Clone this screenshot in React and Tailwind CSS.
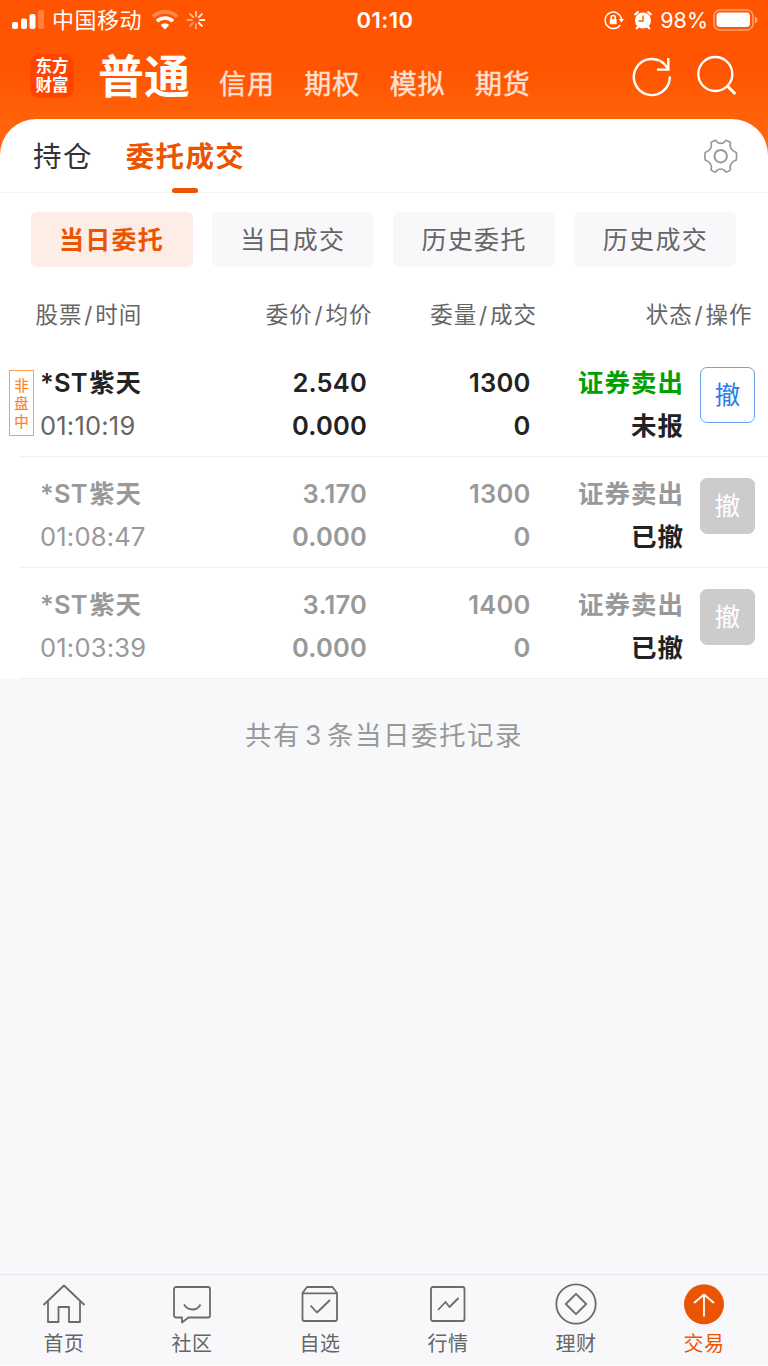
const markets = ['信用', '期权', '模拟', '期货'];

const filters = ['当日委托', '当日成交', '历史委托', '历史成交'];

const orders = [
    { name: '紫天', time: '01:10:19', price: '2.540', avg: '0.000', amount: '1300', filled: '0', side: '证券卖出', status: '未报', active: true },
    { name: '紫天', time: '01:08:47', price: '3.170', avg: '0.000', amount: '1300', filled: '0', side: '证券卖出', status: '已撤', active: false },
    { name: '紫天', time: '01:03:39', price: '3.170', avg: '0.000', amount: '1400', filled: '0', side: '证券卖出', status: '已撤', active: false },
];

const Spinner = () => (
    <svg className="w-5 h-5" viewBox="0 0 20 20" stroke="white" strokeWidth="1.9" strokeLinecap="round">
        {[0.7, 0.85, 0.95, 1, 0.45, 0.4, 0.5, 0.6].map((opacity, i) => (
            <line key={i} x1="10" y1="1.6" x2="10" y2="6" opacity={opacity} transform={`rotate(${i * 45} 10 10)`} />
        ))}
    </svg>
);

const StatusBar = () => (
    <div className="flex items-center h-10 text-white">
        <div className="flex items-center flex-1 pl-3">
            <svg className="w-8 h-5" viewBox="0 0 32 20" fill="white">
                <rect x="0" y="12" width="6" height="7" rx="2" />
                <rect x="9" y="8.5" width="6" height="10.5" rx="2" />
                <rect x="17.5" y="4" width="6" height="15" rx="2" />
                <rect x="26" y="0" width="6" height="19" rx="2" opacity="0.25" />
            </svg>
            <span className="ml-2 text-[22px] leading-10 tracking-[0.5px]">中国移动</span>
            <svg className="w-7 h-5 ml-[9px]" viewBox="0 0 28 20" fill="none" stroke="white" strokeWidth="3.6">
                <path d="M2 6.800a17 17 0 0 1 24 0" opacity="0.3" />
                <path d="M6 11.200a11.500 11.500 0 0 1 16 0" />
                <path d="M14 19.500l-4.300-4.400a6.200 6.200 0 0 1 8.600 0z" fill="white" stroke="none" />
            </svg>
            <span className="ml-[7px]"><Spinner /></span>
        </div>
        <span className="text-[22px] font-semibold leading-10 tracking-[0.5px]">01:10</span>
        <div className="flex items-center justify-end flex-1 pr-[10px]">
            <svg className="w-5 h-5" viewBox="0 0 20 20" fill="none" stroke="white" strokeWidth="1.5">
                <path d="M16.200 14.800A8.200 8.200 0 1 1 17.400 9" />
                <path d="M14.800 9h5.200l-2.600 3.600z" fill="white" stroke="none" />
                <rect x="5.8" y="9" width="6.8" height="5.2" rx="0.8" fill="white" stroke="none" />
                <path d="M7.200 9V7.400a2 2 0 0 1 4 0V9" />
            </svg>
            <svg className="w-5 h-5 ml-[9px]" viewBox="0 0 20 20">
                <circle cx="10" cy="10.5" r="8" fill="white" />
                <path d="M2.200 4.400L4.800 2.200M17.800 4.400L15.200 2.200M3.800 18.300l2-2.500M16.200 18.300l-2-2.500" stroke="white" strokeWidth="2.2" strokeLinecap="round" />
                <path d="M10 5.500V11H5.600" fill="none" stroke="#ff5500" strokeWidth="1.4" />
            </svg>
            <span className="ml-[7px] text-[21.5px] leading-10">98%</span>
            <svg className="w-[45px] h-[22px] ml-[5px]" viewBox="0 0 45 22">
                <rect x="1" y="1" width="39" height="20" rx="6" fill="none" stroke="white" strokeOpacity="0.45" strokeWidth="1.6" />
                <rect x="3.5" y="3.5" width="33.5" height="14.5" rx="3.5" fill="white" />
                <path d="M42 7.500c3.200 1.400 3.200 5.600 0 7z" fill="white" opacity="0.5" />
            </svg>
        </div>
    </div>
);

const TitleBar = () => (
    <div className="flex h-[79px] pl-[30px] text-white">
        <div className="w-11 h-11 mt-3.5 pt-[3px] rounded-[10px] bg-[#ff4400] text-center text-[16.5px] font-bold leading-[19px]">
            东方<br />财富
        </div>
        <h1 className="ml-[24px] text-[46px] font-bold leading-[72px]">普通</h1>
        <nav className="flex flex-1 gap-[29.5px] ml-[29px] pt-[26px]">
            {markets.map((market) => (
                <span key={market} className="text-[27px] leading-[38px] tracking-[0.9px] text-[#ffdfcf] [-webkit-text-stroke:0.5px_#ffdfcf]">{market}</span>
            ))}
        </nav>
        <svg className="w-10 h-10 mt-[17px] overflow-visible" viewBox="0 0 40 40" fill="none" stroke="white" strokeWidth="2.4">
            <path d="M37.800 19.500a18 18 0 1 1-4-10.800l2.700 3.600" />
            <path d="M36.300 1v11.600H25" />
        </svg>
        <svg className="w-10 h-10 mt-[17px] ml-[25px] mr-[31px] overflow-visible" viewBox="0 0 40 40" fill="none" stroke="white" strokeWidth="2.4">
            <circle cx="18.3" cy="17" r="17" />
            <path d="M30.300 29l8 8" strokeWidth="3" />
        </svg>
    </div>
);

const Tabs = () => (
    <div className="flex h-[74px] pl-[33px] pr-[29px] bg-white border-b border-[#f5f5f6] rounded-t-[36px]">
        <span className="text-[28.5px] leading-[76px] tracking-[1.4px] text-[#333]">持仓</span>
        <div className="flex flex-col items-center ml-[33px] h-[74px]">
            <span className="h-[69px] text-[28.5px] font-bold leading-[76px] tracking-[1.3px] text-[#ea5504]">委托成交</span>
            <span className="w-[26px] h-[5px] rounded-sm bg-[#ea5504] shrink-0" />
        </div>
        <svg className="w-9 h-9 mt-[19px] ml-auto" viewBox="0 0 36 36" fill="none" stroke="#999" strokeWidth="1.7" strokeLinejoin="round">
            <path d="M12.500 2.200C14 5 15.500 5.400 17.700 5.400S21.500 5 23 2.200C24.500 2.700 26 3.500 27.500 4.700C26.200 8.500 28 12.800 33.300 14.500Q34 18.200 33.300 22C28 23.500 26.200 28 27.500 31.800C26 33 24.500 33.800 23 34.200C21.500 31.500 20 31 17.700 31S14 31.500 12.500 34.200C11 33.800 9.500 33 8 31.800C9.300 28 7.500 23.500 2.200 22Q1.500 18.200 2.200 14.500C7.500 12.800 9.300 8.500 8 4.700C9.500 3.500 11 2.700 12.500 2.200Z" />
            <circle cx="17.7" cy="18.2" r="6.2" strokeWidth="2" />
        </svg>
    </div>
);

const OrderRow = ({ order }) => {
    const main = order.active ? 'text-[#222]' : 'text-[#999]';
    return (
        <div className="relative flex h-[111px] pl-10 pt-4 text-[25.5px] leading-[42.5px] tracking-[0.2px]">
            {order.active && (
                <span className="absolute left-[9px] top-[24px] w-[25px] h-[66px] pt-[6px] border border-[#ff9c4d] text-center text-[14.5px] leading-[18px] tracking-normal text-[#ff8420] [-webkit-text-stroke:0.2px_#ff8420]">
                    非<br />盘<br />中
                </span>
            )}
            <div className="w-[167px]">
                <div className={`h-[42.5px] font-semibold ${main}`}>*ST<span className="ml-[1.5px] tracking-[0.7px]">{order.name}</span></div>
                <div className={`h-[42.5px] ${order.active ? 'text-[#666]' : 'text-[#999]'}`}>{order.time}</div>
            </div>
            <div className={`w-[160px] text-right font-semibold ${main}`}>
                <div className="h-[42.5px]">{order.price}</div>
                <div className="h-[42.5px]">{order.avg}</div>
            </div>
            <div className={`w-[163.5px] text-right font-semibold ${main}`}>
                <div className="h-[42.5px]">{order.amount}</div>
                <div className="h-[42.5px]">{order.filled}</div>
            </div>
            <div className="w-[153.5px] text-right font-semibold tracking-[1px]">
                <div className={`h-[42.5px] ${order.active ? 'text-[#00a000]' : 'text-[#999]'}`}>{order.side}</div>
                <div className="h-[42.5px] text-[#222]">{order.status}</div>
            </div>
            <button
                className={`w-[55px] h-14 mt-[5px] ml-4 rounded-[7px] border text-[25.5px] leading-[54px] tracking-normal ${
                    order.active ? 'border-[#6ba3f0] text-[#2b7de9]' : 'border-[#ccc] bg-[#ccc] text-white'
                }`}
            >
                撤
            </button>
            <div className="absolute left-[19px] right-0 bottom-0 h-px bg-[#f2f2f3]" />
        </div>
    );
};

const HeaderCell = ({ first, second, className }) => (
    <span className={className}>
        {first}<span className="mx-[1.8px]">/</span>{second}
    </span>
);

const navigation = [
    {
        name: '首页',
        icon: (
            <>
                <path d="M1.500 22L22 2.500 42.500 22" />
                <path d="M6 18.500V39h10.500V24h10.500v15H38V18.500" />
            </>
        ),
    },
    {
        name: '社区',
        icon: (
            <>
                <path d="M6 4h32a2 2 0 0 1 2 2v26.500a2 2 0 0 1-2 2H18.500l-6.500 5v-5H6a2 2 0 0 1-2-2V6a2 2 0 0 1 2-2z" />
                <path d="M14 21.500q3 5 8.500 5t8-5" />
            </>
        ),
    },
    {
        name: '自选',
        icon: (
            <>
                <path d="M4.500 10v26a2 2 0 0 0 2 2h30.500a2 2 0 0 0 2-2V10l-4.500-6H9zM5 10.300h34" />
                <path d="M12.500 22.500l6.500 7L32 17" />
            </>
        ),
    },
    {
        name: '行情',
        icon: (
            <>
                <rect x="5" y="4" width="33.5" height="34" rx="2" />
                <path d="M12 27l7.500-8 4 5 9-9" />
            </>
        ),
    },
    {
        name: '理财',
        icon: (
            <>
                <circle cx="22" cy="21" r="19.700" />
                <path d="M22 10.800L32.200 21 22 31.200 11.800 21z" />
            </>
        ),
    },
    {
        name: '交易',
        active: true,
        icon: (
            <>
                <circle cx="22" cy="21.3" r="20" fill="#ea5504" stroke="none" />
                <path d="M22 33.500V11.500M12 20l10-8.500L32 20" stroke="white" />
            </>
        ),
    },
];

const BottomNav = () => (
    <nav className="grid grid-cols-6 h-[91px] bg-[#f8f8fb] border-t border-[#e4e7e9]">
        {navigation.map((item) => (
            <div key={item.name} className={`flex flex-col items-center pt-2 ${item.active ? 'text-[#ea5504]' : 'text-[#666]'}`}>
                <svg className="w-11 h-[42px]" viewBox="0 0 44 42" fill="none" stroke={item.active ? 'none' : '#6b6b6b'} strokeWidth="1.8" strokeLinejoin="round">
                    {item.icon}
                </svg>
                <span className="mt-[5px] text-[20px] leading-[28px] tracking-[0.6px]">{item.name}</span>
            </div>
        ))}
    </nav>
);

export default function App() {
    return (
        <div className="flex flex-col w-[768px] h-[1366px] overflow-hidden bg-[#f7f8fa] border-b border-white font-['Inter','Noto_Sans_CJK_SC',sans-serif]">
            <header className="bg-linear-to-b from-[#ff5500] from-[70px] to-[#ff6910] to-[150px]">
                <StatusBar />
                <TitleBar />
                <Tabs />
            </header>

            <main className="flex-1">
                <section className="h-[486px] bg-white">
                    <div className="flex gap-[19.3px] pl-[30.5px] pt-[19px]">
                        {filters.map((filter, i) => (
                            <button
                                key={filter}
                                className={`w-[162px] h-[55px] rounded-md text-[25px] leading-[57px] tracking-[1.3px] ${
                                    i === 0 ? 'bg-[#fdede6] font-bold text-[#ea5504]' : 'bg-[#f8f8fa] text-[#666]'
                                }`}
                            >
                                {filter}
                            </button>
                        ))}
                    </div>

                    <div className="flex h-[79px] pl-[35.5px] text-[22.5px] leading-[95px] tracking-[1px] text-[#666]">
                        <HeaderCell first="股票" second="时间" className="w-[172px]" />
                        <HeaderCell first="委价" second="均价" className="w-[165px] text-right" />
                        <HeaderCell first="委量" second="成交" className="w-[164.5px] text-right" />
                        <HeaderCell first="状态" second="操作" className="w-[215.5px] text-right" />
                    </div>

                    {orders.map((order) => (
                        <OrderRow key={order.time} order={order} />
                    ))}
                </section>

                <p className="pt-9 text-center text-[26.5px] leading-[40px] tracking-[1.5px] text-[#999]">
                    共有<span className="mx-1">3</span>条当日委托记录
                </p>
            </main>

            <BottomNav />
        </div>
    );
}
